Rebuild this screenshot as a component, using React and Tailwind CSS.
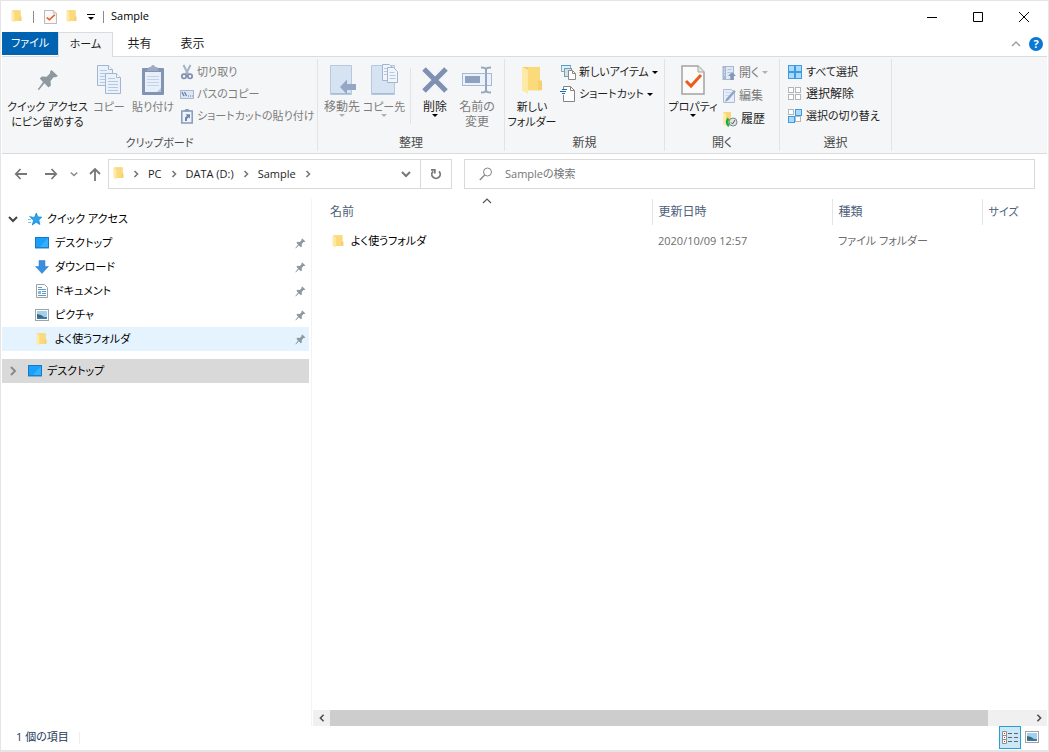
import { useState } from 'react'

// ---- アイコン ----

function FolderIcon({ className }) {
  return (
    <svg viewBox="0 0 22 30" className={className} preserveAspectRatio="none" aria-hidden="true">
      <path d="M2 1h17v24H2z" fill="#f3cd68" />
      <path d="M7 1h12v24H7z" fill="#fada7a" />
      <path d="M1 1l6 3v25l-6-4z" fill="#ffe9a6" />
      <path d="M17 15h4v10h-4z" fill="#f5d06c" />
    </svg>
  )
}

function CheckDocIcon({ className }) {
  return (
    <svg viewBox="0 0 24 30" className={className} preserveAspectRatio="none" aria-hidden="true">
      <path d="M1 1h16l6 6v22H1z" fill="#fafafa" stroke="#a3a3a3" strokeWidth="1.5" />
      <path d="M17 1v6h6" fill="#e6e6e6" stroke="#a3a3a3" />
      <path d="M5 16l5 5 10-11" fill="none" stroke="#eb5b20" strokeWidth="3" />
    </svg>
  )
}

function PinIcon({ className }) {
  return (
    <svg viewBox="0 0 22 22" className={className} fill="#8e999f" aria-hidden="true">
      <path d="M14.500 1l6.500 6-2.500 1.200-1.600-.2-3.400 4 .4 4.500-2.400 2-4-4.200L1.800 21.200.8 20.200 6 13 2.800 9.500l2-2 4.800.3 3.500-3.500-.2-1.600z" />
    </svg>
  )
}

function PageLines({ x, y }) {
  return (
    <g transform={`translate(${x} ${y})`}>
      <path d="M.5.5h11l4 4v16H.5z" fill="#eaf1fa" stroke="#a4b5d0" />
      <path d="M11.500.5v4h4" fill="#f8fbff" stroke="#a4b5d0" />
      <path d="M3 5.500h7M3 8.500h10M3 11.500h10M3 14.500h10M3 17.500h10" stroke="#b5c8e2" />
    </g>
  )
}

function CopyIcon() {
  return (
    <svg viewBox="0 0 26 32" className="h-8 w-[26px]" aria-hidden="true">
      <PageLines x={1} y={1} />
      <PageLines x={9} y={9} />
    </svg>
  )
}

function PasteIcon() {
  return (
    <svg viewBox="0 0 24 32" className="h-8 w-6" aria-hidden="true">
      <rect x="1" y="4" width="22" height="27" rx="1" fill="#8293b4" />
      <path d="M4 8h16v17l-3 3H4z" fill="#e7effa" />
      <path d="M6 12.500h12M6 15.500h12M6 18.500h12M6 21.500h12" stroke="#c3d2e7" />
      <path d="M8 3h2a2 2 0 0 1 4 0h2l2 4H6z" fill="#9caac4" />
      <path d="M16 28l4-4v4z" fill="#b8c6dc" />
    </svg>
  )
}

function ScissorsIcon() {
  return (
    <svg viewBox="0 0 14 16" className="h-4 w-3.5" fill="none" aria-hidden="true">
      <path d="M3.500 1l4.800 9.500M10.500 1L5.700 10.500" stroke="#a5b3ca" strokeWidth="2" />
      <circle cx="4" cy="12.300" r="2.200" stroke="#7f90b0" strokeWidth="1.700" />
      <circle cx="10" cy="12.300" r="2.200" stroke="#7f90b0" strokeWidth="1.700" />
    </svg>
  )
}

function PathIcon() {
  return (
    <svg viewBox="0 0 14 16" className="h-4 w-3.5" aria-hidden="true">
      <rect x=".5" y="4.500" width="13" height="8" fill="#dbe6f4" stroke="#a8b8d2" />
      <path d="M2 6l2 4M4.500 6l2 4" stroke="#6d80a5" strokeWidth="1.300" />
      <path d="M8 10h1M10 10h1M12 10h.8" stroke="#6d80a5" />
    </svg>
  )
}

function PasteShortcutIcon() {
  return (
    <svg viewBox="0 0 14 16" className="h-4 w-3.5" aria-hidden="true">
      <path d="M1.800 3h10.400v12H1.800z" fill="#eef4fb" stroke="#8899b9" strokeWidth="1.500" />
      <path d="M4.500 3.500V2L6 1h2l1.500 1v1.500z" fill="#8899b9" />
      <path d="M5 13V9.500l2-1.800L5.500 6.300H10V10.500L8.700 9.300 7 11v2z" fill="#7185ac" />
    </svg>
  )
}

function MoveToIcon() {
  return (
    <svg viewBox="0 0 28 32" className="h-8 w-7" aria-hidden="true">
      <path d="M2.500 1.500h21v29h-21z" fill="#d5e3f3" stroke="#b7c9e0" />
      <path d="M3 29.500h20" stroke="#a6bbd8" />
      <path d="M12 23l7-7.500V20h9v6h-9v4.500z" fill="#95a7c5" />
    </svg>
  )
}

function CopyToIcon() {
  return (
    <svg viewBox="0 0 30 32" className="h-8 w-[30px]" aria-hidden="true">
      <path d="M2.500 1.500h23v29h-23z" fill="#d5e3f3" stroke="#b7c9e0" />
      <path d="M3 29.500h22" stroke="#a6bbd8" />
      <path d="M13.500.5h7l3 3v13h-10z" fill="#f0f5fb" stroke="#a4b5d0" />
      <path d="M18.500 3.500h6l4 4v11h-10z" fill="#f0f5fb" stroke="#a4b5d0" />
      <path d="M15 4.500h3M15 7.500h3M15 10.500h3M20.500 8.500h5M20.500 11.500h6M20.500 14.500h6" stroke="#b5c8e2" />
    </svg>
  )
}

function DeleteIcon() {
  return (
    <svg viewBox="0 0 28 32" className="h-8 w-7" aria-hidden="true">
      <path d="M3 5l22 22M25 5L3 27" stroke="#7f90b2" strokeWidth="5" />
    </svg>
  )
}

function RenameIcon() {
  return (
    <svg viewBox="0 0 32 32" className="size-8" fill="none" aria-hidden="true">
      <rect x="1.500" y="9.500" width="29" height="12" fill="#e9f1fa" stroke="#a8b9d3" />
      <rect x="4" y="12" width="15" height="7" fill="#8fa1c0" />
      <path d="M20 3.500c3 0 5 0 5 3v19c0 3-2 3-5 3M30 3.500c-3 0-5 0-5 3v19c0 3 2 3 5 3" stroke="#95a5c2" strokeWidth="2" />
    </svg>
  )
}

function NewItemIcon() {
  return (
    <svg viewBox="0 0 16 16" className="size-4" aria-hidden="true">
      <rect x="1.500" y="1.500" width="9" height="6" fill="#dff1f8" stroke="#8fa9b6" />
      <path d="M1 1.500h10" stroke="#4aa3cb" />
      <rect x="4.500" y="4.500" width="7" height="8" fill="#c5e4f0" stroke="#8899a2" />
      <path d="M8.500 6.500h4l3 3v6h-7z" fill="#fff" stroke="#8a8a8a" />
      <path d="M12.500 6.500v3h3" fill="none" stroke="#8a8a8a" />
    </svg>
  )
}

function ShortcutIcon() {
  return (
    <svg viewBox="0 0 16 16" className="size-4" fill="none" aria-hidden="true">
      <path d="M3.500 4V.5h7l4 4v11h-11V9" fill="#fff" stroke="#858585" />
      <path d="M10.500.5v4h4" stroke="#858585" />
      <path d="M2 3.500h5M0 5.500h6M2 7.500h3" stroke="#1c6fb5" />
    </svg>
  )
}

function OpenIcon() {
  return (
    <svg viewBox="0 0 14 16" className="h-4 w-3.5" aria-hidden="true">
      <rect x="1" y="1.500" width="10.500" height="13" fill="#dfe8f4" stroke="#a6b6cf" />
      <path d="M1 1h3v14H1z" fill="#a6b6d0" />
      <path d="M2 4h1M2 7h1M2 10h1" stroke="#fff" />
      <path d="M5.500 4.500h4M5.500 7.500h3" stroke="#b1c2db" />
      <path d="M10 7l4 4h-2.300v4H8.300v-4H6z" fill="#8497b9" />
    </svg>
  )
}

function EditIcon() {
  return (
    <svg viewBox="0 0 14 16" className="h-4 w-3.5" aria-hidden="true">
      <path d="M1.500 1.500h8l3 3v10h-11z" fill="#e5eef9" stroke="#adbcd4" />
      <path d="M3.500 4.500h5M3.500 7.500h4" stroke="#c9d7ea" />
      <path d="M3 14l1-3 8-9 1.800 1.600L6 12.500z" fill="#8fa3c4" />
    </svg>
  )
}

function HistoryIcon() {
  return (
    <svg viewBox="0 0 16 16" className="size-4" aria-hidden="true">
      <path d="M1 1h8v12H1z" fill="#f8d775" />
      <path d="M1 1l3 2v12l-3-2z" fill="#ffe9a6" />
      <circle cx="11" cy="11" r="4" fill="#dde3e3" stroke="#82898c" />
      <path d="M9 11.500l1.500 1.500L13 9" fill="none" stroke="#54615c" />
      <path d="M7 15a5 5 0 0 1-.5-7.500" fill="none" stroke="#21ad3b" strokeWidth="2.500" />
    </svg>
  )
}

function SelectIcon({ mode }) {
  const on = mode === 'all' ? [0, 1, 2, 3] : mode === 'invert' ? [1, 2] : []
  return (
    <svg viewBox="0 0 16 16" className="size-4" aria-hidden="true">
      {[0, 1, 2, 3].map(i => {
        const filled = on.includes(i)
        return (
          <rect
            key={i}
            x={(i % 2) * 7 + 1.5}
            y={Math.floor(i / 2) * 7 + 1.5}
            width={filled ? 6 : 5}
            height={filled ? 6 : 5}
            fill={filled ? '#a9dafb' : '#fff'}
            stroke={filled ? '#3e9be2' : '#b5b5b5'}
          />
        )
      })}
    </svg>
  )
}

function DesktopIcon() {
  return (
    <svg viewBox="0 0 14 12" className="h-3 w-3.5" aria-hidden="true">
      <rect x=".5" y=".5" width="13" height="10" fill="#18a0fb" stroke="#1379c9" />
      <path d="M13 1L5 10h8z" fill="#35b0ff" />
      <path d="M0 11h14" stroke="#2b86c5" />
    </svg>
  )
}

function DownloadIcon() {
  return (
    <svg viewBox="0 0 14 14" className="size-3.5" aria-hidden="true">
      <path d="M4 .5h6v6h3.500L7 13.500.5 6.500H4z" fill="#3b8ede" stroke="#2c7ccc" strokeWidth=".5" />
    </svg>
  )
}

function DocumentIcon() {
  return (
    <svg viewBox="0 0 14 14" className="size-3.5" aria-hidden="true">
      <path d="M1.500.5h8l3 3v10h-11z" fill="#fff" stroke="#9aa0a4" />
      <path d="M3 3.500h4M3 5.500h8M7 7.500h4M7 9.500h4M3 11.500h8" stroke="#5b9cc6" />
      <path d="M3 7h3v3H3z" fill="#87b7d3" />
    </svg>
  )
}

function PictureIcon() {
  return (
    <svg viewBox="0 0 14 12" className="h-3 w-3.5" aria-hidden="true">
      <rect x=".5" y=".5" width="13" height="11" fill="#fff" stroke="#a2a2a2" />
      <path d="M2 2h10v8H2z" fill="#9fd0f2" />
      <path d="M2 5l4 1 3 2 3 .5V10H2z" fill="#3c6a66" />
      <path d="M2 8.500h10V10H2z" fill="#3978b8" />
    </svg>
  )
}

function StarIcon() {
  return (
    <svg viewBox="0 0 14 14" className="size-3.5" aria-hidden="true">
      <path d="M8.300 1l1.500 3.900 4 .3-3.100 2.700 1.200 4.600-3.700-2.300-3.900 2.800 1.300-4.700-3.100-2.800 4.200-.3z" fill="#2ba4ee" stroke="#1787d4" strokeWidth=".8" />
      <path d="M1 4.500h3M0 7.500h3M0 10.500h3" stroke="#74c3f3" />
    </svg>
  )
}

function Chevron({ d = 'M1 3l4 4 4-4', className = 'size-2.5', width = 2 }) {
  return (
    <svg viewBox="0 0 10 10" className={className} fill="none" stroke="currentColor" strokeWidth={width} aria-hidden="true">
      <path d={d} />
    </svg>
  )
}

const RIGHT = 'M3.500 2l3 3-3 3'

function Caret({ className = 'text-black' }) {
  return (
    <svg viewBox="0 0 6 3" className={`h-[3px] w-1.5 shrink-0 ${className}`} fill="currentColor" aria-hidden="true">
      <path d="M0 0h6L3 3z" />
    </svg>
  )
}

function ArrowIcon({ d }) {
  return (
    <svg viewBox="0 0 14 14" className="size-3.5" fill="none" stroke="#777" strokeWidth="1.800" aria-hidden="true">
      <path d={d} />
    </svg>
  )
}

// ---- リボン ----

function BigButton({ icon, lines, width, disabled, caret, size = 'text-[11px]' }) {
  return (
    <button
      type="button"
      className={`mt-[3px] flex shrink-0 flex-col items-center whitespace-nowrap ${size} ${width} ${disabled ? 'text-[#7c7c7c]' : 'text-[#1e1e1e]'}`}
    >
      <span className="mb-[3px] flex h-8 items-center">{icon}</span>
      {lines.map(line => <span key={line} className="leading-[15px]">{line}</span>)}
      {caret && <Caret className={disabled ? 'text-[#b0b0b0]' : 'text-black'} />}
    </button>
  )
}

function SmallButton({ icon, label, disabled, caret, height = 'h-[22px]', size = 'text-[11px]' }) {
  return (
    <button
      type="button"
      className={`flex items-center gap-[3px] whitespace-nowrap ${size} ${height} ${disabled ? 'text-[#7c7c7c]' : 'text-[#1e1e1e]'}`}
    >
      {icon}
      <span>{label}</span>
      {caret && <Caret className={disabled ? 'text-[#b0b0b0]' : 'text-black'} />}
    </button>
  )
}

function RibbonGroup({ label, width, size = 'text-xs', children }) {
  return (
    <section aria-label={label} className={`my-0.5 flex shrink-0 flex-col border-r border-[#e2e3e4] ${width}`}>
      <div className="flex flex-1 items-start pt-0.5">{children}</div>
      <div className={`text-center text-[#4a4a4a] ${size}`}>
        <span className="block leading-[17px]">{label}</span>
      </div>
    </section>
  )
}

function Ribbon() {
  return (
    <div className="flex h-[98px] overflow-hidden border-y border-[#dadbdc] bg-[#f5f6f7]">
      <RibbonGroup label="クリップボード" width="w-[316px]" size="text-[11px]">
        <BigButton width="ml-1 w-[83px]" icon={<PinIcon className="size-[22px]" />} lines={['クイック アクセス', 'にピン留めする']} />
        <BigButton width="w-10" icon={<CopyIcon />} lines={['コピー']} disabled />
        <BigButton width="w-12" icon={<PasteIcon />} lines={['貼り付け']} disabled />
        <div className="ml-[3px] flex flex-col">
          <SmallButton icon={<ScissorsIcon />} label="切り取り" disabled />
          <SmallButton icon={<PathIcon />} label="パスのコピー" disabled />
          <SmallButton icon={<PasteShortcutIcon />} label="ショートカットの貼り付け" disabled />
        </div>
      </RibbonGroup>

      <RibbonGroup label="整理" width="w-[187px]">
        <BigButton width="ml-1 w-10" size="text-xs" icon={<MoveToIcon />} lines={['移動先']} disabled caret />
        <BigButton width="w-11" icon={<CopyToIcon />} lines={['コピー先']} disabled caret />
        <div className="mx-1 mt-[7px] h-14 w-px bg-[#e2e3e4]" />
        <BigButton width="w-10" size="text-xs" icon={<DeleteIcon />} lines={['削除']} caret />
        <BigButton width="w-11" size="text-xs" icon={<RenameIcon />} lines={['名前の', '変更']} disabled />
      </RibbonGroup>

      <RibbonGroup label="新規" width="w-[160px]">
        <BigButton width="ml-1 w-[46px]" icon={<FolderIcon className="h-[29px] w-[22px]" />} lines={['新しい', 'フォルダー']} />
        <div className="ml-[5px] flex flex-col">
          <SmallButton icon={<NewItemIcon />} label="新しいアイテム" caret />
          <SmallButton icon={<ShortcutIcon />} label="ショートカット" caret />
        </div>
      </RibbonGroup>

      <RibbonGroup label="開く" width="w-[115px]">
        <BigButton width="ml-1 w-12" icon={<CheckDocIcon className="h-[30px] w-6" />} lines={['プロパティ']} caret />
        <div className="ml-[5px] flex flex-col items-start">
          <SmallButton height="h-[23px]" size="text-xs" icon={<OpenIcon />} label="開く" disabled caret />
          <SmallButton height="h-[23px]" size="text-xs" icon={<EditIcon />} label="編集" disabled />
          <SmallButton height="h-[23px]" size="text-xs" icon={<HistoryIcon />} label="履歴" />
        </div>
      </RibbonGroup>

      <RibbonGroup label="選択" width="w-[112px]">
        <div className="ml-[7px] flex flex-col">
          <SmallButton icon={<SelectIcon mode="all" />} label="すべて選択" />
          <SmallButton icon={<SelectIcon mode="none" />} label="選択解除" size="text-xs" />
          <SmallButton icon={<SelectIcon mode="invert" />} label="選択の切り替え" />
        </div>
      </RibbonGroup>
    </div>
  )
}

// ---- タイトルバーとタブ ----

function TitleBar() {
  return (
    <header className="flex h-[31px] items-center pl-[9px]">
      <FolderIcon className="h-[13px] w-[11px]" />
      <span className="ml-[11px] h-3 w-px bg-[#8a8a8a]" />
      <button type="button" aria-label="プロパティ" className="ml-2.5">
        <CheckDocIcon className="h-3.5 w-[13px]" />
      </button>
      <button type="button" aria-label="新しいフォルダー" className="ml-[9px]">
        <FolderIcon className="h-[13px] w-[11px]" />
      </button>
      <button type="button" aria-label="クイック アクセス ツール バーのカスタマイズ" className="ml-2.5">
        <svg viewBox="0 0 8 6" className="h-1.5 w-2" aria-hidden="true">
          <path d="M0 0h8v1H0zM1 3h6L4 6z" />
        </svg>
      </button>
      <span className="ml-2 h-3 w-px bg-[#8a8a8a]" />
      <h1 className="ml-[7px] flex-1 text-[11px] text-black">Sample</h1>
      <button type="button" aria-label="最小化" className="flex h-full w-[46px] items-center justify-center">
        <svg viewBox="0 0 10 10" className="size-2.5" stroke="#000" aria-hidden="true"><path d="M0 5.500h10" /></svg>
      </button>
      <button type="button" aria-label="最大化" className="flex h-full w-[46px] items-center justify-center">
        <svg viewBox="0 0 10 10" className="size-2.5" fill="none" stroke="#000" aria-hidden="true"><path d="M.5.5h9v9h-9z" /></svg>
      </button>
      <button type="button" aria-label="閉じる" className="flex h-full w-[46px] items-center justify-center">
        <svg viewBox="0 0 10 10" className="size-2.5" stroke="#000" aria-hidden="true"><path d="M0 0l10 10M10 0L0 10" /></svg>
      </button>
    </header>
  )
}

const tabs = [
  { label: 'ホーム', size: 'text-[11px]' },
  { label: '共有', size: 'text-xs' },
  { label: '表示', size: 'text-xs' },
]

function TabBar() {
  const [active, setActive] = useState('ホーム')
  return (
    <nav className="relative z-10 -mb-px flex h-[25px] items-stretch text-[#1e1e1e]">
      <button type="button" className="mb-[2px] w-14 bg-[#0063b1] text-[11px] text-white">ファイル</button>
      {tabs.map(tab => (
        <button
          key={tab.label}
          type="button"
          onClick={() => setActive(tab.label)}
          className={`border-x border-t pb-0.5 ${tab.size} ${active === tab.label ? 'w-[55px] border-[#dadbdc] bg-[#f5f6f7]' : 'w-[53px] border-transparent'}`}
        >
          {tab.label}
        </button>
      ))}
      <div className="flex flex-1 items-center justify-end gap-2 pr-1 pb-0.5">
        <button type="button" aria-label="リボンの最小化" className="text-[#a0a0a0]">
          <Chevron d="M1 7l4-4 4 4" width={1.5} />
        </button>
        <button type="button" aria-label="ヘルプ" className="flex size-3.5 items-center justify-center rounded-full bg-[#0a78d4] text-[11px] font-bold leading-none text-white">?</button>
      </div>
    </nav>
  )
}

// ---- アドレスバー ----

function AddressBar() {
  return (
    <div className="flex items-center pt-[5px] pr-3 pb-2.5 pl-3">
      <button type="button" aria-label="戻る"><ArrowIcon d="M13 7H2M6.500 2L1.800 7l4.700 5" /></button>
      <button type="button" aria-label="進む" className="ml-4"><ArrowIcon d="M1 7h11M7.500 2l4.700 5-4.700 5" /></button>
      <button type="button" aria-label="最近表示した場所" className="ml-3 text-[#888]">
        <Chevron className="size-2" width={1.8} />
      </button>
      <button type="button" aria-label="上へ" className="ml-2.5"><ArrowIcon d="M7 14V2M2 7l5-5 5 5" /></button>

      <div className="ml-1.5 flex h-[30px] w-[344px] border border-[#d9d9d9] text-[11px] text-[#1e1e1e]">
        <div className="flex flex-1 items-center gap-[7px] pl-1">
          <FolderIcon className="mb-0.5 h-[13px] w-[11px]" />
          {['PC', 'DATA (D:)', 'Sample'].map(part => (
            <div key={part} className="flex items-center gap-[7px]">
              <span className="text-[#777]"><Chevron d={RIGHT} width={1.6} /></span>
              <button type="button">{part}</button>
            </div>
          ))}
          <span className="text-[#777]"><Chevron d={RIGHT} width={1.6} /></span>
        </div>
        <button type="button" aria-label="以前の場所" className="flex w-7 items-center justify-center text-[#777]">
          <Chevron />
        </button>
        <button type="button" aria-label="最新の情報に更新" className="flex w-[31px] items-center justify-center border-l border-[#d9d9d9]">
          <svg viewBox="0 0 12 12" className="size-3" fill="none" stroke="#777" strokeWidth="1.800" aria-hidden="true">
            <path d="M9 3.300A4.200 4.200 0 1 1 3 3.300M1 1.800h3.800v3.800" />
          </svg>
        </button>
      </div>

      <div className="ml-3 flex h-[30px] flex-1 items-center border border-[#d9d9d9] pl-3.5">
        <svg viewBox="0 0 14 14" className="size-3.5" fill="none" stroke="#848484" aria-hidden="true">
          <circle cx="8.500" cy="5" r="4" />
          <path d="M5.700 8L.8 13" strokeWidth="1.300" />
        </svg>
        <input
          type="text"
          aria-label="Sampleの検索"
          placeholder="Sampleの検索"
          className="ml-3 min-w-0 flex-1 bg-transparent text-[11px] outline-none placeholder:text-[#757575]"
        />
      </div>
    </div>
  )
}

// ---- ナビゲーション ----

const pinned = [
  { label: 'デスクトップ', icon: <DesktopIcon /> },
  { label: 'ダウンロード', icon: <DownloadIcon /> },
  { label: 'ドキュメント', icon: <DocumentIcon /> },
  { label: 'ピクチャ', icon: <PictureIcon /> },
  { label: 'よく使うフォルダ', icon: <FolderIcon className="mr-0.5 ml-px h-[13px] w-[11px]" />, hover: true },
]

function Sidebar() {
  return (
    <aside className="flex w-[310px] shrink-0 flex-col border-r border-[#f3f3f3] pt-2 pr-0.5 text-[11px] text-black">
      <button type="button" className="flex h-6 items-center pl-1.5">
        <span className="text-[#444]"><Chevron /></span>
        <span className="mr-[5px] ml-2.5"><StarIcon /></span>
        クイック アクセス
      </button>
      <ul>
        {pinned.map(item => (
          <li key={item.label}>
            <button
              type="button"
              className={`flex h-6 w-full items-center gap-1.5 pr-[3px] pl-[33px] text-left ${item.hover ? 'bg-[#e5f3ff]' : ''}`}
            >
              {item.icon}
              <span className="flex-1">{item.label}</span>
              <PinIcon className="size-[11px]" />
            </button>
          </li>
        ))}
      </ul>
      <button type="button" className="mt-2 flex h-6 items-center bg-[#d9d9d9] pl-1.5">
        <span className="text-[#8a8a8a]"><Chevron d="M3 1l4 4-4 4" /></span>
        <span className="mr-[5px] ml-2.5"><DesktopIcon /></span>
        デスクトップ
      </button>
    </aside>
  )
}

// ---- ファイル一覧 ----

const files = [{ name: 'よく使うフォルダ', date: '2020/10/09 12:57', type: 'ファイル フォルダー' }]

function FileList() {
  return (
    <main className="flex min-w-0 flex-1 flex-col">
      <div className="flex-1">
        <table className="w-full table-fixed text-left text-[11px] text-[#6d6d6d]">
          <thead className="text-xs text-[#4c607a]">
            <tr className="h-[26px]">
              <th className="relative border-r border-[#e5e5e5] pl-[18px] font-normal">
                <span className="absolute -top-0.5 left-1/2 text-[#555]">
                  <Chevron d="M1 6l4-4 4 4" width={1.2} />
                </span>
                名前
              </th>
              <th className="w-[180px] border-r border-[#e5e5e5] pl-1.5 font-normal">更新日時</th>
              <th className="w-[150px] border-r border-[#e5e5e5] pl-1.5 font-normal">種類</th>
              <th className="w-[65px] pl-1.5 text-[11px] font-normal">サイズ</th>
            </tr>
          </thead>
          <tbody>
            {files.map(file => (
              <tr key={file.name} className="h-8">
                <td className="pl-5 text-black">
                  <span className="flex items-center gap-[7px]">
                    <FolderIcon className="h-[13px] w-3" />
                    {file.name}
                  </span>
                </td>
                <td className="pl-1.5">{file.date}</td>
                <td className="pl-1.5">{file.type}</td>
                <td></td>
              </tr>
            ))}
          </tbody>
        </table>
      </div>
      <div className="ml-px flex h-4 bg-[#f0f0f0] text-[#505050]">
        <button type="button" aria-label="左へスクロール" className="flex w-[17px] items-center justify-center">
          <Chevron d="M7 1L3 5l4 4" className="size-2" />
        </button>
        <div className="flex-1"><div className="h-full w-[94%] bg-[#cdcdcd]" /></div>
        <button type="button" aria-label="右へスクロール" className="flex w-[17px] items-center justify-center">
          <Chevron d="M3 1l4 4-4 4" className="size-2" />
        </button>
      </div>
    </main>
  )
}

function StatusBar() {
  return (
    <footer className="flex h-6 items-start pr-2 pl-3.5 text-[11px] leading-[22px] text-[#1e395b]">
      <span>1 個の項目</span>
      <span className="mt-1.5 ml-2.5 h-3 w-px bg-[#eee]" />
      <button
        type="button"
        aria-label="詳細表示"
        className="ml-auto flex h-[23px] w-[22px] items-center justify-center border border-[#26a0da] bg-[#cce8f7]"
      >
        <svg viewBox="0 0 16 13" className="h-[13px] w-4" fill="none" aria-hidden="true">
          <path d="M.5.5h4v12h-4zM.5 4.500h4M.5 8.500h4" fill="#fff" stroke="#8f8f8f" />
          <path d="M2 2.500h1M2 6.500h1M2 10.500h1" stroke="#b33" />
          <path d="M6 2.500h4M12 2.500h4M6 6.500h4M12 6.500h4M6 10.500h4M12 10.500h4" stroke="#596673" />
        </svg>
      </button>
      <button type="button" aria-label="大アイコン表示" className="ml-1 flex h-[21px] items-center">
        <PictureIcon />
      </button>
    </footer>
  )
}

export default function App() {
  return (
    <div className="flex min-h-screen flex-col border border-b-2 border-[#e5e5e5] bg-white px-px font-['Open_Sans','Noto_Sans_CJK_JP',sans-serif] [font-feature-settings:'palt']">
      <TitleBar />
      <TabBar />
      <Ribbon />
      <AddressBar />
      <div className="flex flex-1">
        <Sidebar />
        <FileList />
      </div>
      <StatusBar />
    </div>
  )
}
